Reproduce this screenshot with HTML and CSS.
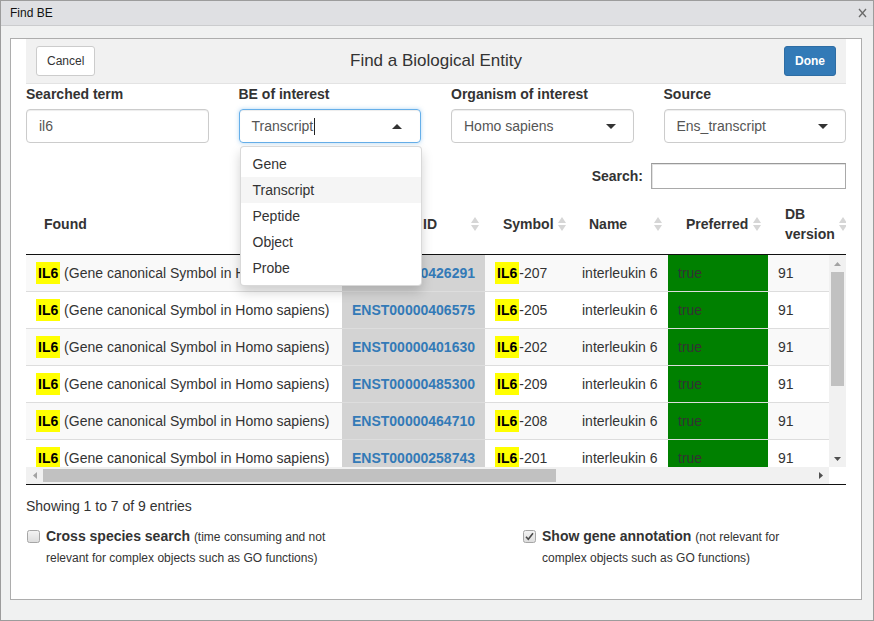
FILE: index.html
```html
<!DOCTYPE html>
<html>
<head>
<meta charset="utf-8">
<title>Find BE</title>
<link rel="stylesheet" href="styles.css">
</head>
<body>
<div class="window">
  <div class="titlebar">
    <span class="wtitle">Find BE</span>
    <svg class="wclose" width="9" height="10" viewBox="0 0 9 10"><path d="M1 1 L8 9 M8 1 L1 9" stroke="#6a6a6a" stroke-width="1.3" fill="none"/></svg>
  </div>
  <div class="wbody">
    <div class="panel">
      <div class="mheader">
        <div class="hleft"><button class="btn btn-default">Cancel</button></div>
        <div class="mtitle">Find a Biological Entity</div>
        <div class="hright"><button class="btn btn-primary">Done</button></div>
      </div>

      <div class="filters">
        <div class="fcol">
          <div class="flabel">Searched term</div>
          <div class="control">il6</div>
        </div>
        <div class="fcol">
          <div class="flabel">BE of interest</div>
          <div class="control focus">
            <span>Transcript<span class="cursor"></span></span>
            <span class="caret up"></span>
            <div class="menu">
              <div class="mi">Gene</div>
              <div class="mi active">Transcript</div>
              <div class="mi">Peptide</div>
              <div class="mi">Object</div>
              <div class="mi">Probe</div>
            </div>
          </div>
        </div>
        <div class="fcol">
          <div class="flabel">Organism of interest</div>
          <div class="control"><span>Homo sapiens</span><span class="caret"></span></div>
        </div>
        <div class="fcol">
          <div class="flabel">Source</div>
          <div class="control"><span>Ens_transcript</span><span class="caret"></span></div>
        </div>
      </div>

      <div class="searchrow">
        <span class="slabel">Search:</span>
        <div class="sinput"></div>
      </div>

      <div class="thead">
        <div class="th w-found-h"><span>Found</span><svg class="sort" width="8" height="16" viewBox="0 0 8 16"><path d="M0 7 L4 1 L8 7 Z M0 9 L8 9 L4 15 Z" fill="#d6d6d6"/></svg></div>
        <div class="th w-id-h"><span>ID</span><svg class="sort" width="8" height="16" viewBox="0 0 8 16"><path d="M0 7 L4 1 L8 7 Z M0 9 L8 9 L4 15 Z" fill="#d6d6d6"/></svg></div>
        <div class="th w-sym-h"><span>Symbol</span><svg class="sort" width="8" height="16" viewBox="0 0 8 16"><path d="M0 7 L4 1 L8 7 Z M0 9 L8 9 L4 15 Z" fill="#d6d6d6"/></svg></div>
        <div class="th w-name-h"><span>Name</span><svg class="sort" width="8" height="16" viewBox="0 0 8 16"><path d="M0 7 L4 1 L8 7 Z M0 9 L8 9 L4 15 Z" fill="#d6d6d6"/></svg></div>
        <div class="th w-pref-h"><span>Preferred</span><svg class="sort" width="8" height="16" viewBox="0 0 8 16"><path d="M0 7 L4 1 L8 7 Z M0 9 L8 9 L4 15 Z" fill="#d6d6d6"/></svg></div>
        <div class="th w-db-h"><span>DB<br>version</span><svg class="sort" width="8" height="16" viewBox="0 0 8 16"><path d="M0 7 L4 1 L8 7 Z M0 9 L8 9 L4 15 Z" fill="#d6d6d6"/></svg></div>
      </div>

      <div class="tbody">
        <div class="rows">
          <div class="row odd">
            <div class="td w-found"><mark>IL6</mark>&nbsp;(Gene canonical Symbol in Homo sapiens)</div>
            <div class="td w-id idcell">ENST00000426291</div>
            <div class="td w-sym"><mark>IL6</mark>-207</div>
            <div class="td w-name">interleukin 6</div>
            <div class="td w-pref pref">true</div>
            <div class="td w-db">91</div>
            <div class="td w-more"></div>
          </div>
          <div class="row even">
            <div class="td w-found"><mark>IL6</mark>&nbsp;(Gene canonical Symbol in Homo sapiens)</div>
            <div class="td w-id idcell">ENST00000406575</div>
            <div class="td w-sym"><mark>IL6</mark>-205</div>
            <div class="td w-name">interleukin 6</div>
            <div class="td w-pref pref">true</div>
            <div class="td w-db">91</div>
            <div class="td w-more"></div>
          </div>
          <div class="row odd">
            <div class="td w-found"><mark>IL6</mark>&nbsp;(Gene canonical Symbol in Homo sapiens)</div>
            <div class="td w-id idcell">ENST00000401630</div>
            <div class="td w-sym"><mark>IL6</mark>-202</div>
            <div class="td w-name">interleukin 6</div>
            <div class="td w-pref pref">true</div>
            <div class="td w-db">91</div>
            <div class="td w-more"></div>
          </div>
          <div class="row even">
            <div class="td w-found"><mark>IL6</mark>&nbsp;(Gene canonical Symbol in Homo sapiens)</div>
            <div class="td w-id idcell">ENST00000485300</div>
            <div class="td w-sym"><mark>IL6</mark>-209</div>
            <div class="td w-name">interleukin 6</div>
            <div class="td w-pref pref">true</div>
            <div class="td w-db">91</div>
            <div class="td w-more"></div>
          </div>
          <div class="row odd">
            <div class="td w-found"><mark>IL6</mark>&nbsp;(Gene canonical Symbol in Homo sapiens)</div>
            <div class="td w-id idcell">ENST00000464710</div>
            <div class="td w-sym"><mark>IL6</mark>-208</div>
            <div class="td w-name">interleukin 6</div>
            <div class="td w-pref pref">true</div>
            <div class="td w-db">91</div>
            <div class="td w-more"></div>
          </div>
          <div class="row even">
            <div class="td w-found"><mark>IL6</mark>&nbsp;(Gene canonical Symbol in Homo sapiens)</div>
            <div class="td w-id idcell">ENST00000258743</div>
            <div class="td w-sym"><mark>IL6</mark>-201</div>
            <div class="td w-name">interleukin 6</div>
            <div class="td w-pref pref">true</div>
            <div class="td w-db">91</div>
            <div class="td w-more"></div>
          </div>
        </div>
        <div class="vscroll">
          <div class="sbtn"><svg width="7" height="4" viewBox="0 0 7 4"><path d="M0 4 L3.5 0 L7 4 Z" fill="#a3a3a3"/></svg></div>
          <div class="vthumb"></div>
          <div class="vspace"></div>
          <div class="sbtn"><svg width="7" height="4" viewBox="0 0 7 4"><path d="M0 0 L7 0 L3.5 4 Z" fill="#505050"/></svg></div>
        </div>
      </div>

      <div class="hscroll">
        <div class="htrack">
          <div class="sbtn"><svg width="4" height="7" viewBox="0 0 4 7"><path d="M4 0 L4 7 L0 3.5 Z" fill="#a3a3a3"/></svg></div>
          <div class="hthumb"></div>
          <div class="hspace"></div>
          <div class="sbtn"><svg width="4" height="7" viewBox="0 0 4 7"><path d="M0 0 L4 3.5 L0 7 Z" fill="#505050"/></svg></div>
        </div>
        <div class="corner"></div>
      </div>
      <div class="tline"></div>

      <div class="info">Showing 1 to 7 of 9 entries</div>

      <div class="checks">
        <div class="chk">
          <svg class="cb" width="13" height="13" viewBox="0 0 13 13"><defs><linearGradient id="g1" x1="0" y1="0" x2="0" y2="1"><stop offset="0" stop-color="#f4f4f4"/><stop offset="1" stop-color="#dcdcdc"/></linearGradient></defs><rect x="0.5" y="0.5" width="12" height="12" rx="2" fill="url(#g1)" stroke="#a6a6a6"/></svg>
          <div class="ctext"><b>Cross species search</b> <span class="small">(time consuming and not<br>relevant for complex objects such as GO functions)</span></div>
        </div>
        <div class="chk">
          <svg class="cb" width="13" height="13" viewBox="0 0 13 13"><defs><linearGradient id="g2" x1="0" y1="0" x2="0" y2="1"><stop offset="0" stop-color="#f4f4f4"/><stop offset="1" stop-color="#dcdcdc"/></linearGradient></defs><rect x="0.5" y="0.5" width="12" height="12" rx="2" fill="url(#g2)" stroke="#a6a6a6"/><path d="M3 6.8 L5.3 9.3 L10 3.3" stroke="#4a4a4a" stroke-width="1.6" fill="none"/></svg>
          <div class="ctext"><b>Show gene annotation</b> <span class="small">(not relevant for<br>complex objects such as GO functions)</span></div>
        </div>
      </div>
    </div>
  </div>
</div>
</body>
</html>
```

FILE: styles.css
```css
* { box-sizing: border-box; }
html, body { margin: 0; padding: 0; }
body {
  font-family: "Liberation Sans", Arial, sans-serif;
  font-size: 14px;
  line-height: 20px;
  color: #333;
  background: #fff;
}
.window {
  width: 874px;
  height: 621px;
  border: 1px solid #9c9c9c;
  background: #f0f1f1;
  display: flex;
  flex-direction: column;
  overflow: hidden;
}
.titlebar {
  flex: none;
  height: 25px;
  background: #dfe0e3;
  border-bottom: 1px solid #cbccce;
  display: flex;
  align-items: center;
  justify-content: space-between;
  padding: 0 6px 0 9px;
  font-size: 12px;
  color: #111;
}
.wbody { padding: 12px 11px 0 9px; }
.panel {
  height: 562px;
  border: 1px solid #adadad;
  background: #fff;
  padding: 0 15px;
}
.mheader {
  height: 45px;
  background: #f1f1f1;
  border-bottom: 1px solid #e3e3e3;
  display: grid;
  grid-template-columns: 1fr auto 1fr;
  align-items: center;
  padding: 0 10px;
}
.hright { text-align: right; }
.mtitle { font-size: 17px; color: #333; }
.btn {
  height: 30px;
  padding: 0 10px;
  font-family: "Liberation Sans", Arial, sans-serif;
  font-size: 12px;
  border-radius: 3px;
  border: 1px solid #ccc;
  line-height: 28px;
}
.btn-default { background: #fff; color: #333; }
.btn-primary { background: #337ab7; border-color: #2e6da4; color: #fff; font-weight: bold; }

.filters {
  display: grid;
  grid-template-columns: repeat(4, 1fr);
  column-gap: 30px;
}
.fcol { position: relative; }
.flabel { font-weight: bold; margin-bottom: 5px; }
.control {
  position: relative;
  height: 34px;
  border: 1px solid #ccc;
  border-radius: 4px;
  padding: 0 12px;
  display: flex;
  align-items: center;
  justify-content: space-between;
  color: #555;
  box-shadow: inset 0 1px 1px rgba(0,0,0,.075);
}
.control.focus {
  border-color: #66afe9;
  box-shadow: inset 0 1px 1px rgba(0,0,0,.075), 0 0 4px rgba(102,175,233,.5);
}
.cursor {
  display: inline-block;
  width: 1px;
  height: 17px;
  background: #222;
  vertical-align: -4px;
  margin-left: 1px;
}
.caret {
  width: 0;
  height: 0;
  border-left: 5px solid transparent;
  border-right: 5px solid transparent;
  border-top: 5px solid #333;
  margin-right: 5px;
}
.caret.up {
  border-top: 0;
  border-bottom: 5px solid #333;
  margin-right: 6px;
}
.menu {
  position: absolute;
  left: 0;
  top: 36px;
  width: 182px;
  background: #fff;
  border: 1px solid rgba(0,0,0,.15);
  border-radius: 4px;
  box-shadow: 0 6px 12px rgba(0,0,0,.175);
  padding: 4px 0;
  z-index: 10;
}
.mi { height: 26px; line-height: 26px; padding: 0 12px; color: #333; }
.mi.active { background: #f5f5f5; }

.searchrow {
  margin-top: 20px;
  display: flex;
  justify-content: flex-end;
  align-items: center;
  gap: 8px;
}
.slabel { font-weight: bold; }
.sinput {
  width: 195px;
  height: 26px;
  border: 1px solid #a9a9a9;
  border-top-color: #999;
  box-shadow: inset 1px 1px 0 #e3e3e3;
  background: #fff;
}

.thead {
  margin-top: 5px;
  height: 61px;
  border-bottom: 1px solid #111;
  display: flex;
  overflow: hidden;
}
.th {
  flex: none;
  height: 60px;
  display: flex;
  align-items: center;
  justify-content: space-between;
  padding: 0 6px 0 18px;
  font-weight: bold;
}
.sort { flex: none; }
.w-found-h { width: 379px; }
.w-id-h { width: 80px; }
.w-sym-h { width: 86px; padding-right: 5px; }
.w-name-h { width: 97px; }
.w-pref-h { width: 99px; }
.w-db-h { width: 86px; }

.tbody { display: flex; height: 212px; }
.rows { width: 803px; flex: none; overflow: hidden; }
.row {
  display: flex;
  height: 37px;
  border-bottom: 1px solid #ddd;
  width: max-content;
}
.row.odd { background: #f9f9f9; }
.row.even { background: #fff; }
.td {
  flex: none;
  display: flex;
  align-items: center;
  padding: 0 10px;
  white-space: nowrap;
}
.w-found { width: 316px; }
.w-id { width: 143px; }
.w-sym { width: 85px; }
.w-name { width: 98px; padding-left: 12px; }
.w-pref { width: 100px; }
.w-db { width: 90px; }
.w-more { width: 400px; }
.idcell { background: #d3d3d3; color: #337ab7; font-weight: bold; }
.pref { background: #008000; color: #333; }
mark {
  background: #ffff00;
  color: #000;
  font-weight: bold;
  padding: 1px 2px;
  line-height: 20px;
}

.vscroll {
  width: 17px;
  flex: none;
  background: #f1f1f1;
  display: flex;
  flex-direction: column;
}
.sbtn {
  width: 17px;
  height: 17px;
  flex: none;
  display: flex;
  align-items: center;
  justify-content: center;
}
.vthumb { height: 114px; margin: 0 2px; background: #c1c1c1; flex: none; }
.vspace { flex: 1; }

.hscroll { display: flex; height: 17px; }
.htrack { width: 803px; display: flex; background: #f1f1f1; }
.hthumb { width: 513px; height: 13px; margin: 2px 0; background: #c1c1c1; flex: none; }
.hspace { flex: 1; }
.corner { flex: 1; background: #fff; }
.tline { height: 1px; background: #111; }

.info { padding-top: 11px; }

.checks {
  margin-top: 10px;
  display: grid;
  grid-template-columns: 496px 1fr;
}
.chk { display: flex; gap: 6px; padding-left: 1px; }
.cb { flex: none; margin-top: 4px; }
.ctext { line-height: 20px; }
.ctext b { font-weight: bold; }
.small { font-size: 12px; }
```
